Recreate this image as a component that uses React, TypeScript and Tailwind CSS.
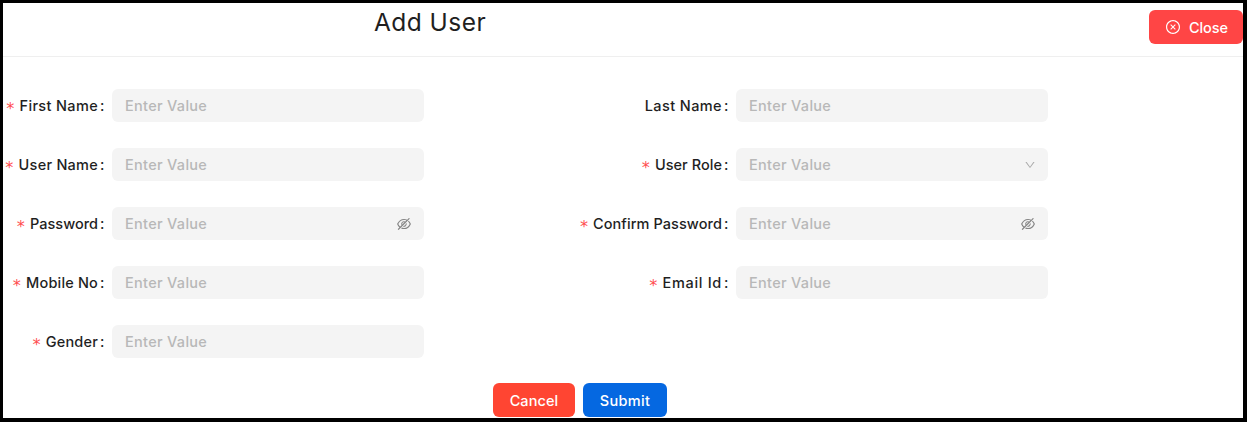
import { AiOutlineCloseCircle, AiOutlineDown, AiOutlineEyeInvisible } from "react-icons/ai";

type Field = {
  label: string;
  tracking: string;
  required?: boolean;
  icon?: "eye" | "down";
};

const fields: Field[] = [
  { label: "First Name", tracking: "tracking-[0.35px]", required: true },
  { label: "Last Name", tracking: "tracking-[0.4px]" },
  { label: "User Name", tracking: "tracking-[0.25px]", required: true },
  { label: "User Role", tracking: "tracking-[0.05px]", required: true, icon: "down" },
  { label: "Password", tracking: "tracking-[0px]", required: true, icon: "eye" },
  { label: "Confirm Password", tracking: "tracking-[0.08px]", required: true, icon: "eye" },
  { label: "Mobile No", tracking: "tracking-[0.17px]", required: true },
  { label: "Email Id", tracking: "tracking-[0.7px]", required: true },
  { label: "Gender", tracking: "tracking-[0.2px]", required: true },
];

function FormField({ label, tracking, required, icon }: Field) {
  return (
    <div className="flex h-[33px] items-center">
      <label className="flex w-[109px] shrink-0 items-center justify-end whitespace-nowrap pr-2 text-[14.5px] font-[450] text-[#1f1f1f]">
        {required && (
          <span className="mr-1 h-5 w-[10px] font-['DejaVu_Sans_Mono',monospace] text-[16px] font-normal leading-[25px] text-[#ff4d4f]">*</span>
        )}
        <span className={tracking}>{label}</span>
        <span className="ml-[2px] w-1">:</span>
      </label>
      <div className="flex h-[33px] w-[312px] items-center justify-between rounded-md bg-[#f4f4f4] pl-[13px] pr-[12px] text-[14.5px] font-[450] text-[#b8b8b8]">
        <span className="tracking-[0.3px]">Enter Value</span>
        {icon === "eye" && <AiOutlineEyeInvisible className="size-4 text-[#858585]" />}
        {icon === "down" && <AiOutlineDown className="size-3 text-[#aaaaaa]" />}
      </div>
    </div>
  );
}

export default function App() {
  return (
    <div className="h-[422px] w-[1247px] overflow-hidden border-t-3 border-r-4 border-b-4 border-l-3 border-black bg-white font-['Inter',sans-serif]">
      <header className="flex h-[54px] items-start justify-between border-b border-[#efefef] pl-[371px]">
        <h1 className="mt-[3px] text-[24.5px] font-normal leading-8 tracking-[0.45px] text-[#1f1f1f]">Add User</h1>
        <button className="mt-[7px] flex h-[34px] w-[94px] items-center rounded-md bg-[#ff4545] pl-4 text-[14.5px] font-medium text-white">
          <AiOutlineCloseCircle className="mr-2 size-4" />
          <span className="pt-[2px] tracking-[-0.1px]">Close</span>
        </button>
      </header>
      <form className="pt-8">
        <div className="grid grid-cols-[624px_624px] gap-y-[26px]">
          {fields.map((field) => (
            <FormField key={field.label} {...field} />
          ))}
        </div>
        <div className="mt-[25px] flex gap-2 pl-[490px] text-[14.5px] font-medium text-white">
          <button type="button" className="h-[34px] w-[82px] rounded-md bg-[#ff4532] pt-[2px] tracking-[0.1px]">Cancel</button>
          <button type="button" className="h-[34px] w-[84px] rounded-md bg-[#0568e1] pt-[2px] tracking-[0.3px]">Submit</button>
        </div>
      </form>
    </div>
  );
}
